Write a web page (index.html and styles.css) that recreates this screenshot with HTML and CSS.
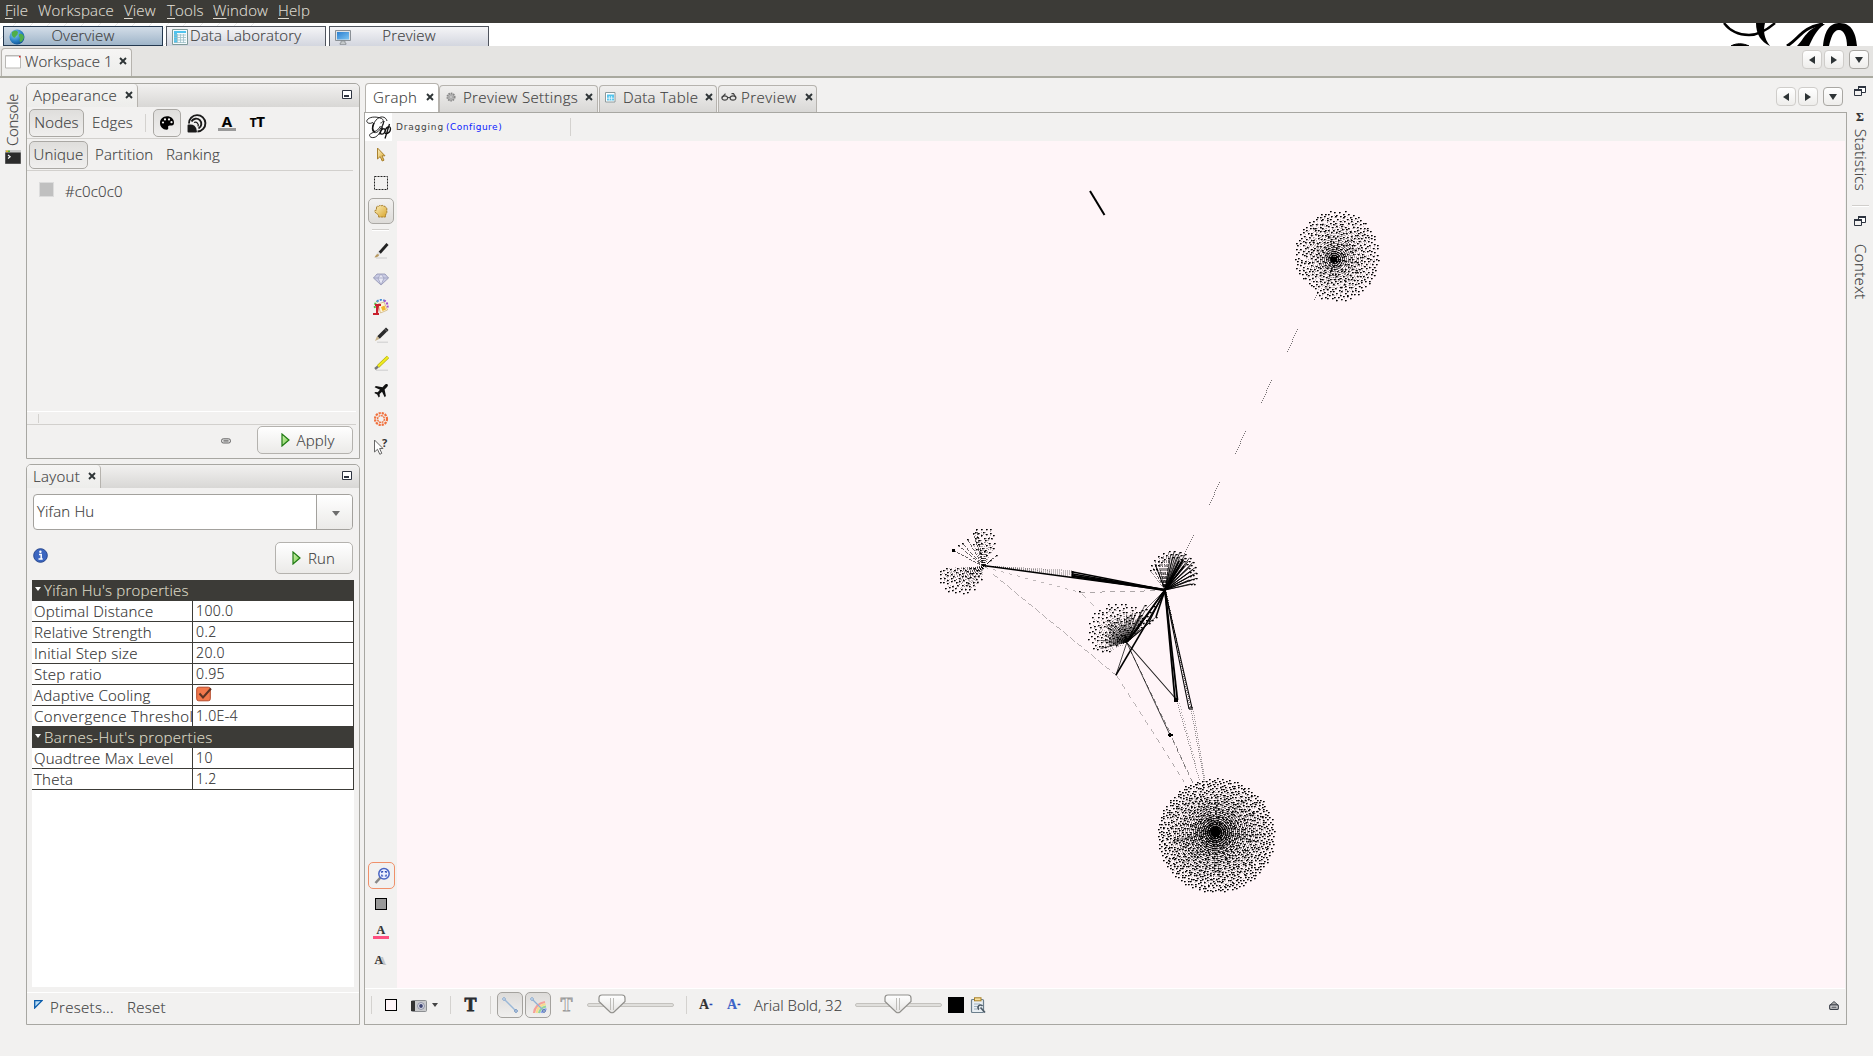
FILE: index.html
```html
<!DOCTYPE html>
<html lang="en">
<head>
<meta charset="utf-8">
<title>Gephi</title>
<link rel="stylesheet" href="styles.css">
</head>
<body>
<svg class="defs" width="0" height="0">
  <defs>
    <linearGradient id="gold" x1="0" y1="0" x2="1" y2="1"><stop offset="0" stop-color="#fbeebc"/><stop offset="1" stop-color="#d9a62e"/></linearGradient>
    <linearGradient id="knob" x1="0" y1="0" x2="0" y2="1"><stop offset="0" stop-color="#fff"/><stop offset="1" stop-color="#e4e3e1"/></linearGradient>
    <linearGradient id="green" x1="0" y1="0" x2="1" y2="1"><stop offset="0" stop-color="#d8f5b8"/><stop offset="1" stop-color="#6cc644"/></linearGradient>
    <linearGradient id="screen" x1="0" y1="0" x2="1" y2="1"><stop offset="0" stop-color="#2b7fd0"/><stop offset="1" stop-color="#7cc4f2"/></linearGradient>
    <radialGradient id="globe" cx=".35" cy=".3" r=".8"><stop offset="0" stop-color="#8fd2f5"/><stop offset=".6" stop-color="#2a7fc4"/><stop offset="1" stop-color="#0e4a86"/></radialGradient>
    <symbol id="close" viewBox="0 0 8 8"><path d="M1 1l6 6M7 1L1 7" stroke="#2e3436" stroke-width="1.9"/></symbol>
    <symbol id="min" viewBox="0 0 10 9"><path d="M.5.5h9v8h-9z" fill="#fff" stroke="#2e3440"/><path d="M2 6h5" stroke="#2e3440" stroke-width="2"/></symbol>
    <symbol id="float" viewBox="0 0 12 10"><path d="M4.5 1h7v5.500h-7z" fill="#fff" stroke="#2e3440"/><path d="M4 1h8" stroke="#2e3440" stroke-width="2"/><path d="M.5 4h7v5.500h-7z" fill="#f2f1f0" stroke="#2e3440"/><path d="M0 4h8" stroke="#2e3440" stroke-width="2"/></symbol>
    <symbol id="play" viewBox="0 0 9 14"><path d="M1 1v12l7-6z" fill="url(#green)" stroke="#1f7a12" stroke-width="1.2"/></symbol>
    <symbol id="thumb" viewBox="0 0 28 20"><path d="M4 1h20q3 0 3 3v3.500L16 18q-2 1.500-4 0L1 7.500V4q0-3 3-3z" fill="url(#knob)" stroke="#908f8b" stroke-width="1.200"/><path d="M12.500 4v12M15.500 4v12" stroke="#bdbcb8"/></symbol>
  </defs>
</svg>

<div class="menubar">
  <span class="m1"><u>F</u>ile</span><span class="m2">Workspace</span><span class="m3"><u>V</u>iew</span><span class="m4"><u>T</u>ools</span><span class="m5"><u>W</u>indow</span><span class="m6"><u>H</u>elp</span>
</div>

<div class="banner">
  <div class="persp on">
    <svg width="16" height="16" viewBox="0 0 16 16"><circle cx="8" cy="8" r="7.500" fill="url(#globe)"/><path d="M3 3q4-3 6 0 0 3-2 4-1 3-3 1-2-2-1-5zM10 5q4-1 5 3-1 5-4 5-1-2 0-4-2-2-1-4z" fill="#4fae4a"/></svg>
    <span>Overview</span>
  </div>
  <div class="persp lab">
    <svg width="16" height="16" viewBox="0 0 16 16"><path d="M.5.5h15v15H.5z" fill="#f4fafc" stroke="#7f9a98"/><path d="M2 2h12v2H2zM2 4h3v10H2z" fill="#4fc3ee"/><path d="M5.500 5v9M8.500 5v9M11.500 5v9M2 6h12M2 8.500h12M2 11h12M2 13.500h12" stroke="#9dbfc6" stroke-width=".8"/></svg>
    <span>Data Laboratory</span>
  </div>
  <div class="persp">
    <svg width="16" height="16" viewBox="0 0 16 16"><path d="M.5 1.500h15v10H.5z" fill="#dfe3e6" stroke="#8a9096"/><path d="M2 3h12v7.500H2z" fill="url(#screen)"/><path d="M6 12h4v2h1v1.500H5V14h1z" fill="#c4c8cb" stroke="#7d8388" stroke-width=".6"/></svg>
    <span>Preview</span>
  </div>
  <svg class="brand" width="151" height="23" viewBox="1722 23 151 23" fill="none" stroke="#000"><path d="M1724 23c6 8 14 12 25 12 10 0 19-6 26-12" stroke-width="2.400"/><path d="M1756 23h9c-2 8-1 15 5 23-9-4-14-12-14-23z" fill="#000" stroke="none"/><path d="M1731 46c5-3 12-3 18 0z" fill="#000" stroke-width="1"/><path d="M1787 46c13-8 15-19 36-22" stroke-width="3"/><path d="M1797 46c8-8 9-17 26-22h2c-9 6-12 14-16 22z" fill="#000" stroke="none"/><path d="M1823 46c2-18 8-23 17-23 12 0 16 11 17 23h-10c0-9-3-16-8-16-6 0-8 8-10 16z" fill="#000" stroke="none"/></svg>
</div>

<div class="worktabs">
  <div class="tab wtab"><svg width="16" height="14" viewBox="0 0 16 14"><path d="M.5.500h15v12.500H.5z" fill="#fff" stroke="#b9b8b5"/><path d="M1 1.500h13" stroke="#ddd"/><path d="M14 1h1.500v1.500H14z" fill="#e02020"/></svg><span>Workspace 1</span><svg class="x" width="8" height="8"><use href="#close"/></svg></div>
  <div class="navs"><button class="nav dim"><i class="l"></i></button><button class="nav dim"><i class="r"></i></button><button class="nav"><i class="d"></i></button></div>
</div>

<div class="work">
  <div class="gutter left">
    <span class="vert up">Console</span>
    <svg width="16" height="14" viewBox="0 0 16 14"><path d="M.5.500h15v13H.5z" fill="#2c2c2c" stroke="#555"/><path d="M0 0h16v2.500H0z" fill="#c9c9c9"/><path d="M1 .5h2v1.500H1z" fill="#e8b020"/><path d="M3 .5h2v1.500H3z" fill="#5ab030"/><path d="M3 5l2.200 1.800L3 8.500" fill="none" stroke="#fff" stroke-width="1.100"/></svg>
  </div>

  <div class="side">
    <section class="panel appearance">
      <header class="ptabs"><div class="tab ptab"><span>Appearance</span><svg class="x" width="8" height="8"><use href="#close"/></svg></div><div class="fill"><svg width="10" height="9"><use href="#min"/></svg></div></header>
      <div class="row">
        <button class="tog nodes on">Nodes</button><button class="tog edges">Edges</button><i class="vsep"></i>
        <button class="ic on"><svg width="16" height="16" viewBox="0 0 16 16"><path d="M8 1.300C3.800 1.300 1 4.300 1 8c0 3.800 3 6.700 6.500 6.700 1.400 0 2-.9 1.700-2-.4-1.400.3-2.300 1.700-2.300h1.800c1.600 0 2.300-1.100 2.300-2.700C15 3.900 12 1.300 8 1.300z" fill="#000"/><g fill="#f2f1f0"><circle cx="4" cy="7.500" r="1.100"/><circle cx="6" cy="4.400" r="1.100"/><circle cx="10" cy="4.400" r="1.100"/><circle cx="12.500" cy="7.200" r="1.100"/></g></svg></button>
        <button class="ic"><svg width="20" height="20" viewBox="0 0 20 20" fill="none" stroke="#1a1a1a" stroke-width="1.900"><path d="M2 10.500a8.200 8.200 0 1 1 8.500 8"/><path d="M4.500 8.500a5.200 5.200 0 1 1 7 7"/><path d="M7 9.500a3 3 0 0 1 4 4" stroke-width="1.300"/><path d="M1.500 18.500v-6q7-1 7.500 6z" fill="#1a1a1a" stroke-linejoin="round"/></svg></button>
        <button class="ic"><span class="glyphA">A</span></button>
        <button class="ic"><span class="glyphT"><small>T</small>T</span></button>
      </div>
      <div class="row two">
        <button class="tog unique on">Unique</button><span class="t1">Partition</span><span class="t2">Ranking</span>
      </div>
      <div class="abody"><i class="swatch"></i><span>#c0c0c0</span></div>
      <div class="strip"><i></i></div>
      <div class="afoot"><svg width="10" height="6" viewBox="0 0 10 6" fill="none" stroke="#666"><rect x=".5" y=".8" width="9" height="4.200" rx="1.800" fill="#ddd"/><path d="M2.500 2.900h5" stroke-width="1.200"/></svg><button class="btn apply"><svg width="9" height="14"><use href="#play"/></svg>Apply</button></div>
    </section>

    <section class="panel layout">
      <header class="ptabs"><div class="tab ptab ltab"><span>Layout</span><svg class="x" width="8" height="8"><use href="#close"/></svg></div><div class="fill"><svg width="10" height="9"><use href="#min"/></svg></div></header>
      <div class="combo"><span>Yifan Hu</span><b><i class="d"></i></b></div>
      <div class="runrow">
        <svg width="15" height="15" viewBox="0 0 15 15"><circle cx="7.500" cy="7.500" r="6.800" fill="#3b66c0" stroke="#27478f"/><path d="M6 6.500h2.200v4.200M5.500 11h4.200" stroke="#fff" stroke-width="1.500" fill="none"/><circle cx="7.400" cy="3.800" r="1.200" fill="#fff"/></svg>
        <button class="btn run"><svg width="9" height="14"><use href="#play"/></svg>Run</button>
      </div>
      <div class="sheet">
        <div class="group"><i></i>Yifan Hu's properties</div>
        <div class="prop"><span>Optimal Distance</span><em>100.0</em></div>
        <div class="prop"><span>Relative Strength</span><em>0.2</em></div>
        <div class="prop"><span>Initial Step size</span><em>20.0</em></div>
        <div class="prop"><span>Step ratio</span><em>0.95</em></div>
        <div class="prop"><span>Adaptive Cooling</span><em><svg width="16" height="16" viewBox="0 0 16 16"><rect x=".7" y="1.200" width="13.600" height="13.600" rx="2" fill="#f2784b" stroke="#b5492a"/><path d="M3.500 7.500l3.500 4L15 2.500" fill="none" stroke="#5c3324" stroke-width="2"/></svg></em></div>
        <div class="prop"><span class="wide">Convergence Threshold</span><em>1.0E-4</em></div>
        <div class="group second"><i></i>Barnes-Hut's properties</div>
        <div class="prop"><span>Quadtree Max Level</span><em>10</em></div>
        <div class="prop"><span>Theta</span><em>1.2</em></div>
      </div>
      <div class="presets"><svg width="9" height="9" viewBox="0 0 9 9"><path d="M.7.700h7.300L.7 8z" fill="#b9dcf5" stroke="#0b5cab" stroke-width="1.300"/></svg><span class="pr">Presets...</span><span>Reset</span></div>
    </section>
  </div>

  <main class="editor">
    <div class="etabs">
      <div class="tab etab cur"><span>Graph</span><svg class="x" width="8" height="8"><use href="#close"/></svg></div>
      <div class="tab etab ps"><svg width="10" height="10" viewBox="0 0 11 11"><circle cx="5.500" cy="5.500" r="4" fill="#b5b5b5" stroke="#888" stroke-width="2" stroke-dasharray="1.600 1"/><circle cx="5.500" cy="5.500" r="1.300" fill="#eee" stroke="#888" stroke-width=".6"/></svg><span>Preview Settings</span><svg class="x" width="8" height="8"><use href="#close"/></svg></div>
      <div class="tab etab dt"><svg width="11" height="11" viewBox="0 0 11 11"><path d="M.5.500h9.500v9.500H.5z" fill="#fff" stroke="#8c9a9c"/><path d="M2 2.500h7v6H2z" fill="#55c4ec"/><path d="M4.300 4v4.500M6.600 4v4.500M2 6.200h7" stroke="#fff" stroke-width=".7"/></svg><span>Data Table</span><svg class="x" width="8" height="8"><use href="#close"/></svg></div>
      <div class="tab etab pv"><svg width="16" height="8" viewBox="0 0 16 8" fill="none" stroke="#444" stroke-width="1.200"><ellipse cx="3.800" cy="5" rx="2.900" ry="2.200"/><ellipse cx="12" cy="5" rx="2.900" ry="2.200"/><path d="M6.700 4.500h2.500M1 4.500L4.500.7M14.900 4.500L12.500.7h-2"/></svg><span>Preview</span><svg class="x" width="8" height="8"><use href="#close"/></svg></div>
      <div class="navs"><button class="nav dim"><i class="l"></i></button><button class="nav dim"><i class="r"></i></button><button class="nav"><i class="d"></i></button></div>
    </div>
    <div class="ebody">
      <div class="status">
        <svg width="27" height="28" viewBox="0 0 27 28" fill="none" stroke="#111"><path d="M0 0h27v28H0z" fill="#fff" stroke="none"/><path d="M8 9.500C3 12 0 8.500 3 6s9-2.500 13.500-.5c3 1.500 1.500 4-1 4.500M22 8C20 1 10 3 7.500 14.500c-.8 5.500 3.500 7 7 2.500 2-3 4-6 4.500-9-2 8-5 15.500-10 16.500-4 .8-6-2.500-3-4 4-2 8-3.500 9.500-7.500" stroke-width=".9"/><path d="M9 10c-2 4-2 8 1 9" stroke-width="1.600"/><path d="M14.500 21.500l3-7M16.500 17c3-3 4.500 0 3 2.500s-4.500 2-4-.5zM20 19.500c0-5 5-8 5.500-4 .3 4-5.500 7-5.500 4zM24.500 11l-4.500 14.500" stroke-width="1.300"/></svg>
        <span class="drag">Dragging</span><a class="conf">(Configure)</a><i class="vsep"></i>
      </div>
      <div class="tools">
        <div class="t"><svg width="16" height="16" viewBox="0 0 16 16"><path d="M4.500 1v11l2.700-2.500 2 4.500 1.800-.8-2-4.400H12z" fill="url(#gold)" stroke="#a9812e"/></svg></div>
        <div class="t"><svg width="16" height="16" viewBox="0 0 16 16"><path d="M1.500 1.500h13v13h-13z" fill="none" stroke="#222" stroke-dasharray="2 1"/></svg></div>
        <div class="t on"><svg width="16" height="16" viewBox="0 0 16 16"><path d="M3.500 5q0-2.500 2.200-1.600.8-1.600 2.400-.6 1.500-1 2.500.4 1.600-.4 1.900 1 1.300.3 1.300 1.800V9.500L12.500 12v2H5.500v-2L2 9.200Q1 7 3.300 7.200z" fill="url(#gold)" stroke="#a9812e" stroke-dasharray="2.500 .5"/></svg></div>
        <i class="hsep"></i>
        <div class="t"><svg width="16" height="16" viewBox="0 0 16 16"><path d="M3 15h11" stroke="#ccc"/><path d="M14.500 1l-8 9" stroke="#222" stroke-width="2.800"/><path d="M6.500 9.500L4.500 12" stroke="#ddd" stroke-width="3"/><path d="M5 11q-2 0-3.500 3.500 4-.2 4.500-2.500z" fill="#b99a62"/></svg></div>
        <div class="t"><svg width="16" height="16" viewBox="0 0 16 16"><path d="M4 3h8l3.500 4L8 14 .5 7z" fill="#c9cbe4" stroke="#8d8fae" stroke-width=".8"/><path d="M.5 7h15M5 7l3 7 3-7-3-4z" fill="#e6e7f4" stroke="#9a9cba" stroke-width=".7"/></svg></div>
        <div class="t"><svg width="16" height="16" viewBox="0 0 16 16"><g fill="none" stroke-width="2" stroke-dasharray="2 1.200"><path d="M2 9a6.200 6.200 0 0 1 2-6.500" stroke="#58c04a"/><path d="M4 2.500A6.200 6.200 0 0 1 11 1.500" stroke="#4a90d8"/><path d="M11 1.500a6.200 6.200 0 0 1 3.500 7" stroke="#a44fc8"/></g><path d="M5 5l6-2 3.500 8-7 3z" fill="#fff4d8" stroke="#c9aa70" stroke-width=".7"/><path d="M8 8l3.500-1.500 1.500 4-3.500 1.500z" fill="#efb72e"/><path d="M2 5h6v2H6L5 14H3V7H2zM0 14h6v2H0z" fill="#c8202c"/></svg></div>
        <div class="t"><svg width="16" height="16" viewBox="0 0 16 16"><path d="M4 15.200h11" stroke="#ccc"/><path d="M14.300 1.700L5.500 10.500" stroke="#2b2b2b" stroke-width="3.600"/><path d="M4 9.200l2.600 2.600L2 14z" fill="#c8b48c"/><path d="M11.800 2.200l2.500 2.500" stroke="#888" stroke-width=".8"/></svg></div>
        <div class="t"><svg width="16" height="16" viewBox="0 0 16 16"><path d="M3 15.200h12" stroke="#ccc"/><path d="M15 2L5 11.500" stroke="#b5ad10" stroke-width="3.200"/><path d="M15 2L5 11.500" stroke="#f0ec20" stroke-width="2"/><path d="M5 11.500l-3 2.500" stroke="#777" stroke-width="2.400"/></svg></div>
        <div class="t"><svg width="16" height="16" viewBox="0 0 16 16"><path d="M14.600 1.400c-.9-.8-2.300 0-3.200.9L9.500 4.300 2.800 3 1.600 4.200 7 6.800 4.700 9.200 2.300 9l-1 1 2.900 1.500L5.700 14.500l1.100-1-.2-2.500L9 8.800l2.700 5.500 1.200-1.200-1.300-6.700 2-1.900c1-.9 1.800-2.300 1-3.100z" fill="#111"/></svg></div>
        <div class="t"><svg width="16" height="16" viewBox="0 0 16 16" fill="none" stroke="#f0703c"><circle cx="8" cy="8" r="6" stroke-width="2.200" stroke-dasharray="2.200 .94"/><circle cx="8" cy="8" r="3.400" stroke-width="1.400" stroke-dasharray="2 .6"/></svg></div>
        <div class="t"><svg width="18" height="18" viewBox="0 0 18 18"><path d="M2.500 2v12l3-2.700 2.300 5 2-1-2.200-4.800H11z" fill="#fff" stroke="#666"/><text x="10" y="9" class="q">?</text></svg></div>
        <i class="grow"></i>
        <div class="t focus"><svg width="18" height="18" viewBox="0 0 18 18"><path d="M7.500 10.500L2.500 16" stroke="#888" stroke-width="2.600"/><circle cx="11" cy="6.800" r="5.200" fill="#eef2ff" stroke="#4a66c4" stroke-width="1.500"/><path d="M8.800 6V4.600h1.400M11.800 4.600h1.400V6M13.200 7.600V9h-1.400M10.200 9H8.800V7.600" fill="none" stroke="#2b49b4" stroke-width="1.100"/></svg></div>
        <div class="t"><i class="sq gray"></i></div>
        <div class="t"><span class="pinkA">A</span></div>
        <div class="t"><span class="shadeA">A</span></div>
      </div>
      <canvas id="graph" width="1448" height="847"></canvas>
      <div class="bottom">
        <i class="vsep s1"></i><i class="sq pink"></i>
        <svg class="cam" width="16" height="13" viewBox="0 0 16 13"><rect x=".5" y="1.500" width="15" height="11" rx="1" fill="#c9cacc" stroke="#8d8f92"/><path d="M0 2h4v10H0z" fill="#333"/><circle cx="10" cy="7" r="3.400" fill="#e8e8ee" stroke="#8a8ea4"/><circle cx="10" cy="7" r="1.900" fill="#3e4574"/></svg>
        <i class="d small"></i><i class="vsep s2"></i>
        <span class="bigT">T</span><i class="vsep s3"></i>
        <button class="bt"><svg width="18" height="18" viewBox="0 0 18 18"><path d="M3 3l12 12" stroke="#9ab8d8" stroke-width="1.300"/><circle cx="3" cy="3" r="1.300" fill="#fff" stroke="#7ea2cc"/><circle cx="15" cy="15" r="1.300" fill="#fff" stroke="#5c84b8"/></svg></button>
        <button class="bt"><svg width="18" height="18" viewBox="0 0 18 18" fill="none"><path d="M5 17q1-9 11-11" stroke="#f5a09a" stroke-width="2.200"/><path d="M7.500 17q1-7 9-9" stroke="#f6dc8c" stroke-width="2.200"/><path d="M10 17q1-5 7-6.500" stroke="#94d69a" stroke-width="2.200"/><path d="M12.500 17q1-3 5-4" stroke="#94a8ec" stroke-width="2.200"/><path d="M3 3l12 12" stroke="#8fb0d4" stroke-width="1.300"/><circle cx="3" cy="3" r="1.300" fill="#fff" stroke="#7ea2cc"/><circle cx="15" cy="15" r="1.300" fill="#fff" stroke="#3c60a8"/></svg></button>
        <span class="bigT ghost">T</span>
        <div class="slider"><svg class="thumb a" width="28" height="20"><use href="#thumb"/></svg></div>
        <i class="vsep s4"></i>
        <span class="fa">A<i>-</i></span><span class="fa blue">A<i>-</i></span>
        <span class="font">Arial Bold, 32</span>
        <div class="slider two"><svg class="thumb b" width="28" height="20"><use href="#thumb"/></svg></div>
        <i class="black"></i>
        <svg class="clip" width="17" height="17" viewBox="0 0 17 17"><rect x="1.500" y="2.500" width="12" height="13" rx="1" fill="#e8eef2" stroke="#6c7f8c" stroke-width="1.200"/><rect x="4.500" y=".8" width="6.500" height="3" fill="#f5dfa0" stroke="#a87f22"/><path d="M4 7h6M4 9.500h4M4 12h3" stroke="#9fb2c0"/><path d="M15 15.500L10.500 10.500M9 12.500a2.500 2.500 0 1 1 3.500-3.500" stroke="#4c5a66" stroke-width="1.700" fill="none"/></svg>
        <svg class="eject" width="10" height="9" viewBox="0 0 10 9"><path d="M5 .5L9 4H1z" fill="#aaa" stroke="#3a3f48" stroke-width=".9"/><rect x=".7" y="4" width="8.600" height="4.300" rx=".8" fill="#ddd" stroke="#3a3f48" stroke-width="1.200"/><path d="M2.500 6.200h5" stroke="#3a3f48"/></svg>
      </div>
    </div>
  </main>

  <div class="gutter right">
    <svg width="12" height="10"><use href="#float"/></svg>
    <span class="sigma">Σ</span>
    <span class="vert stat">Statistics</span>
    <i class="hsep"></i>
    <svg width="12" height="10"><use href="#float"/></svg>
    <span class="vert ctx">Context</span>
  </div>
</div>
<script src="graph.js"></script>
</body>
</html>
```
FILE: styles.css
```css
* { box-sizing: border-box; }
body { margin: 0; width: 1873px; height: 1056px; overflow: hidden; background: #f2f1f0; color: #404040; font: 300 15px/20px "Open Sans", "Noto Sans", sans-serif; letter-spacing: .15px; -webkit-text-stroke: .15px; display: flex; flex-direction: column; }
svg, canvas { display: block; flex: none; }
i, em { font-style: normal; }
span, a, button { white-space: nowrap; }
button { font: inherit; letter-spacing: inherit; color: inherit; margin: 0; padding: 0; border: 0; background: none; display: flex; align-items: center; justify-content: center; }
.defs { position: absolute; }

.menubar { height: 23px; flex: none; background: #3c3b37; color: #dfdbd2; display: flex; padding-left: 5px; line-height: 21px; }
.menubar u { text-underline-offset: 2px; text-decoration-thickness: 1px; }
.m1 { width: 33px; } .m2 { width: 86px; } .m3 { width: 43px; } .m4 { width: 46px; } .m5 { width: 65px; }

.banner { height: 23px; flex: none; background: repeating-linear-gradient(135deg, #fff 0 11px, #ececec 11px 12px) 0 0 / 260px 23px no-repeat, #fff; display: flex; padding: 3px 0 0 3px; gap: 3px; }
.persp { width: 160px; height: 20px; border: 1px solid #50555e; border-bottom: 0; background: linear-gradient(#f5f5f7, #d3d6df); display: flex; padding: 2px 0 0 5px; line-height: 16px; }
.persp span { flex: 1; text-align: center; padding-right: 21px; margin-top: -2px; }
.persp.lab span { padding: 0 0 0 2px; text-align: left; }
.persp.on { border-color: #24384f; background: linear-gradient(#d3dde8, #9fb5c9); border-radius: 0; }
.brand { margin: -3px 0 0 auto; }

.worktabs { height: 32px; flex: none; background: #e5e4e2; border-bottom: 2px solid #a9a99f; display: flex; padding: 2px 4px 0 1px; }
.tab { display: flex; align-items: center; border: 1px solid #b6b3ae; border-bottom: 0; border-radius: 4px 4px 0 0; background: linear-gradient(#f6f5f4, #ededeb); }
.tab .x { margin-left: auto; }
.wtab { width: 131px; height: 28px; padding: 0 4px 3px 3px; gap: 4px; letter-spacing: .05px; }
.wtab > svg:first-child { margin-top: 2px; }
.navs { margin-left: auto; display: flex; gap: 2px; }
.worktabs .navs { padding-top: 2px; }
.nav { width: 20px; height: 19px; border: 1px solid #a9a7a3; border-radius: 4px; background: linear-gradient(#fff, #eeedeb); }
.nav:last-child { margin-left: 3px; }
.nav.dim { border-color: #cfcdca; }
.l, .r, .d { width: 0; height: 0; border: 4px solid transparent; }
.l { border-width: 4px 6px 4px 0; border-right-color: #2e3436; }
.r { border-width: 4px 0 4px 6px; border-left-color: #2e3436; }
.d { border-width: 6px 4px 0; border-top-color: #2e3436; }

.work { flex: 1; display: flex; }
.gutter { display: flex; flex-direction: column; align-items: center; }
.left { width: 26px; padding-top: 15px; }
.vert { writing-mode: vertical-rl; line-height: 20px; }
.vert.up { transform: rotate(180deg); height: 52px; margin: 1px 2px 4px 0; letter-spacing: -.3px; }
.right { width: 26px; padding: 8px 0 0 0; }
.sigma { font: bold 12px/12px "Liberation Serif", serif; color: #333; margin: 15px 0 6px; }
.stat { height: 64px; letter-spacing: .3px; margin-left: 2px; } .ctx { margin: 18px 0 0 2px; letter-spacing: .4px; }
.right .hsep { margin: 12px 0 9px; }
.hsep { width: 17px; height: 2px; border-top: 1px solid #d0cecb; background: #fff; flex: none; }
.vsep { width: 1px; background: #d4d2cf; flex: none; }

.side { width: 334px; padding-top: 5px; display: flex; flex-direction: column; gap: 5px; }
.panel { border: 1px solid #a8a7a2; border-radius: 5px 5px 0 0; display: flex; flex-direction: column; }
.appearance { height: 376px; } .layout { height: 561px; }
.ptabs { height: 23px; display: flex; flex: none; }
.ptab { width: 111px; border-width: 0 1px 0 0; padding: 0 4px 1px 6px; letter-spacing: .3px; }
.ltab { width: 74px; }
.fill { flex: 1; border-radius: 0 5px 0 0; background: linear-gradient(#f2f1f0, #d8d7d5); display: flex; justify-content: flex-end; padding: 6px 7px 0 0; }
.row { height: 32px; flex: none; border-bottom: 1px solid #d2d0cd; display: flex; align-items: center; padding-left: 2px; }
.two > span { margin-top: -2px; }
.on { border: 1px solid #aaa8a4; border-radius: 5px; background: linear-gradient(#dfdedc, #f0efee); }
.tog { height: 28px; padding-bottom: 1px; } .nodes { width: 55px; } .edges { width: 57px; }
.row .vsep { height: 18px; margin: 0 7px 0 4px; }
.ic { width: 28px; height: 28px; margin-right: 2px; }
.glyphA { width: 18px; border-bottom: 3px solid #999; color: #000; font: bold 15px/14px "Open Sans", sans-serif; text-align: center; }
.glyphT { color: #000; font: bold 15px/20px "Open Sans", sans-serif; letter-spacing: -.5px; margin-top: -1px; }
.glyphT small { font-size: 12px; }
.unique { width: 59px; } .t1 { margin-left: 7px; width: 71px; }
.abody { height: 240px; display: flex; padding: 10px 0 0 12px; gap: 11px; }
.swatch { width: 15px; height: 15px; margin-top: 1px; background: #c0c0c0; border: 1px solid #dcdcdc; }
.strip { height: 14px; border-top: 1px solid #fff; border-bottom: 1px solid #d2d0cd; margin-right: 3px; padding: 2px 0 0 11px; }
.strip i { display: block; width: 1px; height: 9px; background: #d4d2cf; }
.afoot { display: flex; padding: 1px 6px 0 194px; justify-content: space-between; }
.afoot > svg { margin-top: 12px; }
.btn { border: 1px solid #b4b2ae; border-radius: 5px; background: linear-gradient(#fff, #ebeae8); gap: 7px; }
.apply { width: 96px; height: 28px; padding: 0 0 1px 5px; } .run { width: 78px; height: 32px; padding: 0 1px 1px 0; }
.combo { margin: 6px 6px 0; height: 36px; border: 1px solid #a3a19d; border-radius: 4px; background: #fff; display: flex; flex: none; line-height: 33px; padding-left: 3px; color: #3a3a3a; }
.combo span { flex: 1; }
.combo b { width: 36px; border-left: 1px solid #a3a19d; background: linear-gradient(#fff, #ebeae8); display: flex; align-items: center; justify-content: center; border-radius: 0 4px 4px 0; padding: 2px 0 0 2px; }
.combo .d { border-width: 5px 4px 0; border-top-color: #6d6d6d; }
.runrow { height: 50px; flex: none; display: flex; justify-content: space-between; padding: 12px 6px 0 6px; }
.runrow > svg { margin-top: 6px; }
.sheet { margin: 0 5px; height: 407px; flex: none; background: #fff; color: #303030; line-height: 20px; }
.group { height: 21px; background: #3c3b37; color: #dfdbc8; padding-left: 3px; display: flex; gap: 3px; line-height: 20px; letter-spacing: .22px; }
.group.second { letter-spacing: .34px; }
.group i { margin-top: 7px; height: 0; border: 4px solid transparent; border-width: 4px 3.500px 0; border-top-color: #fff; }
.prop { height: 21px; border-bottom: 1px solid #3c3b37; border-right: 1px solid #3c3b37; display: flex; line-height: 21px; letter-spacing: .25px; }
.prop span { width: 161px; border-right: 1px solid #3c3b37; overflow: hidden; padding-left: 2px; flex: none; }
.prop .wide { letter-spacing: .42px; }
.prop em { padding-left: 3px; font-size: 14px; line-height: 19px; letter-spacing: .4px; }
.prop em svg { margin: 1px 0 0; }
.presets { margin-top: 5px; border-top: 1px solid #fff; height: 32px; display: flex; padding: 4px 0 0 7px; letter-spacing: .3px; }
.presets svg { margin-top: 3px; } .pr { margin-left: 7px; width: 77px; }

.editor { margin-left: 4px; width: 1483px; padding-top: 5px; }
.etabs { height: 29px; display: flex; align-items: flex-end; padding: 0 4px 0 1px; letter-spacing: .35px; }
.etab { height: 27px; padding: 0 4px 4px 6px; gap: 7px; margin-right: 1px; background: linear-gradient(#f0efee, #d9d8d6); }
.cur { width: 74px; height: 29px; background: #fff; padding: 0 4px 2px 7px; margin-right: 0; }
.ps { width: 159px; } .dt { width: 118px; padding-left: 5px; } .pv { width: 99px; padding: 0 3px 4px 2px; gap: 4px; letter-spacing: .5px; }
.etabs .navs { align-self: flex-start; padding-top: 4px; }
.ebody { height: 913px; border: 1px solid #a8a7a2; display: grid; grid-template: 28px 847px 36px / 32px 1448px; background: #f2f1f0; }
.status { grid-column: 1 / 3; display: flex; align-items: center; font: 9px/12px "DejaVu Sans", sans-serif; letter-spacing: .8px; color: #444; -webkit-text-stroke: 0; }
.drag { margin-left: 4px; width: 50px; } .conf { color: #0a20ff; letter-spacing: .5px; width: 124px; }
.status .vsep { height: 18px; }
.tools { display: flex; flex-direction: column; padding: 0 0 14px 3px; }
.t { width: 26px; height: 28px; display: flex; align-items: center; justify-content: center; flex: none; }
.t.on { height: 26px; margin: 1px 0 5px; background: linear-gradient(#f2f1f0, #dddbd8); }
.tools .hsep { margin: 0 4px 6px; }
.grow { flex: 1; }
.t.focus { border: 1.500px solid #f0906a; border-radius: 5px; height: 27px; width: 27px; margin-bottom: 1px; }
.q { font: bold 11px "Open Sans", sans-serif; fill: #333; }
.sq { width: 12px; height: 12px; border: 1px solid #000; display: block; flex: none; } .gray { background: #999; } .pink { background: #fff5f8; }
.pinkA { width: 16px; border-bottom: 3px solid #ff4f80; font: bold 12px/11px "Liberation Serif", serif; text-align: center; color: #333; }
.shadeA { font: bold 12px/12px "Liberation Serif", serif; color: #333; text-shadow: 3px 1px 0 #c4c4c4; margin-right: 4px; }
#graph { background: #fff5f8; }
.bottom { grid-column: 1 / 3; border-top: 1px solid #fff; display: flex; align-items: center; padding: 0 6px 3px 6px; }
.bottom .vsep { height: 18px; }
.pink { margin: 0 14px 0 13px; }
.small { margin: 0 12px 0 5px; border-width: 4px 3px 0; border-top-color: #444; flex: none; }
.bigT { width: 15px; margin: 0 12px; font: bold 18px/20px "Liberation Serif", serif; color: #2a2c30; text-align: center; -webkit-text-stroke: .8px #2a2c30; }
.bt { width: 26px; height: 26px; border: 1px solid #a4a29e; border-radius: 5px; background: linear-gradient(#dddbd9, #f0efee); margin-right: 2px; }
.s3 { margin-right: 6px; }
.ghost { color: #f4f4f4; -webkit-text-stroke: .8px #999; margin: 0 13px 0 6px; }
.slider { width: 87px; height: 4px; border: 1px solid #c4c2be; border-radius: 2px; background: #e0dfdc; position: relative; flex: none; margin-right: 12px; }
.thumb { position: absolute; left: 10px; top: -10px; } .thumb.b { left: 28px; }
.fa { margin-left: 12px; width: 17px; font: bold 14px/16px "Liberation Serif", serif; color: #333; display: flex; }
.blue { margin-left: 11px; color: #3c63c8; } .fa i { font: bold 10px/12px "Open Sans", sans-serif; color: #2b49b4; }
.font { margin: -1px 0 0 10px; width: 101px; letter-spacing: 0; }
.two { margin-right: 6px; }
.black { width: 16px; height: 16px; background: #000; margin-right: 6px; }
.eject { margin-left: auto; }
```
FILE: graph.js
```js
const ctx = document.getElementById('graph').getContext('2d');
ctx.translate(-397, -141);

let seed = 7;
const rnd = () => (seed = (seed * 16807) % 2147483647) / 2147483647;

function px(x, y, a) {
  ctx.fillStyle = `rgba(0,0,0,${a})`;
  ctx.fillRect(Math.round(x), Math.round(y), 1, 1);
}
function dot(x, y) {
  px(x, y, 1); px(x + 1, y, .7); px(x, y + 1, .35); px(x + 1, y + 1, .15);
}
function line(x1, y1, x2, y2, w, a = 1) {
  ctx.strokeStyle = `rgba(0,0,0,${a})`;
  ctx.lineWidth = w;
  ctx.beginPath(); ctx.moveTo(x1, y1); ctx.lineTo(x2, y2); ctx.stroke();
}
// One-pixel edge, plotted every `step` pixels; on/off groups give a dash
function dots(x1, y1, x2, y2, a, step = 2, on = 0, off = 0) {
  const n = Math.max(Math.abs(x2 - x1), Math.abs(y2 - y1));
  for (let i = 0; i < n; i += step) {
    if (on && i % (on + off) >= on) continue;
    px(x1 + (x2 - x1) * i / n, y1 + (y2 - y1) * i / n, a);
  }
}
// Leaves packed in an ellipse, joined to their hub
function cluster(cx, cy, rx, ry, hx, hy, n, spoke, keep = () => true) {
  for (let i = 0; i < n; i++) {
    const r = Math.sqrt((i + .5) / n), t = i * 2.39996;
    const j = r > .95 ? .4 : 2;
    const x = cx + rx * r * Math.cos(t) + (rnd() - .5) * j;
    const y = cy + ry * r * Math.sin(t) + (rnd() - .5) * j;
    if (!keep(x, y)) continue;
    const d = Math.hypot(x - hx, y - hy);
    for (let k = 2; k < d; k += 2)
      if (rnd() < .55) px(hx + (x - hx) * k / d, hy + (y - hy) * k / d, spoke);
    dot(x, y);
  }
}
function rays(hx, hy, r, n, w, a) {
  for (let i = 0; i < n; i++) {
    const t = i * 6.283 / n + rnd() * .25, q = r * (.4 + rnd() * .6);
    line(hx, hy, hx + q * Math.cos(t), hy + q * Math.sin(t), w, a);
  }
}

line(1090, 191, 1104.500, 215, 2);

cluster(1336.500, 255.500, 42, 45.500, 1334, 259, 500, .2, (x, y) => !(x < 1318 && y > 272 + (x - 1296)));
rays(1334, 259, 34, 14, .8, .45);
rays(1334, 259, 14, 22, .7, .5);
ctx.fillStyle = '#000'; ctx.fillRect(1331, 257, 6, 5);

[[1317, 293, 1313, 300], [1297, 329, 1286, 353], [1271, 380, 1260, 404], [1245, 431, 1234, 455], [1219, 482, 1208, 506], [1193, 535, 1183, 556]]
  .forEach(s => dots(...s, .55, 2));

cluster(1215.500, 835, 58.500, 57, 1215, 832, 1180, .17);
rays(1215, 832, 46, 30, .9, .5);
rays(1215, 832, 24, 44, .8, .5);
ctx.fillStyle = '#000'; ctx.beginPath(); ctx.arc(1215.500, 832, 5, 0, 7); ctx.fill();

// Upper left community
cluster(960, 573, 22.500, 21, 983, 566, 105, .25, (x, y) => y > 567);
cluster(984, 541, 12, 15, 983, 566, 34, .3);
[[953, 550], [958, 545], [962, 543], [967, 539], [973, 533], [976, 529], [996, 555], [990, 560]].forEach(([x, y]) => { dots(983, 566, x, y, .6, 1, 3, 1); dot(x, y); });
ctx.fillStyle = '#000'; ctx.fillRect(952, 549, 3, 3);
for (let i = 0; i < 6; i++) dots(985, 565.500, 1072, 570 + i * 1.200, .25, 2);
line(983, 565.500, 1165, 590, 1.700);
line(1073, 572, 1165, 590, 1.600); line(1073, 576, 1165, 590, 2.500); line(1073, 574, 1165, 590, 1.600); line(1072.500, 571, 1072.500, 577, 2);
dots(985, 567, 1080, 592, .25, 1, 3, 5);
dots(1080, 592, 1164, 590, .32, 1, 5, 5); dot(1079, 591);
dots(1082, 594, 1098, 610, .25, 1, 4, 4);
dots(993, 574, 1116, 675, .28, 1, 5, 2);
dots(1116, 675, 1157, 739, .26, 1, 5, 4);
dots(1157, 739, 1184, 782, .3, 1, 4, 4);

// Right hub
for (let i = 0; i < 44; i++) {
  const t = 3.300 + (i / 43) * 3.500, k = 1 - (i % 3) * .13;
  const x = 1173 + 23.500 * k * Math.cos(t), y = 574 + 23 * k * Math.sin(t);
  if (i > 15) line(1165, 590, x, y, .9, .9); else dots(1165, 590, x, y, .4, 1, 3, 1);
  dot(x, y);
}
[[1183, 560], [1181, 563], [1184, 566], [1179, 561]].forEach(([x, y]) => line(1165, 590, x, y, 1.600));
line(1165, 590, 1155, 564, 1); line(1165, 590, 1160, 570, .8, .6);

// Centre community
cluster(1118, 632, 31, 30, 1127, 642, 180, .25, (x, y) => y < 653 - Math.max(0, x - 1106) * .7);
for (let i = 0; i < 28; i++) {
  const t = 2.900 + i * .1, q = 17 + rnd() * 14;
  line(1127, 642, 1127 + q * Math.cos(t), 642 + q * Math.sin(t), .8, .8);
}
[[1145, 605], [1142, 610], [1150, 612], [1147, 616], [1154, 606], [1156, 617], [1141, 615], [1152, 620], [1146, 609], [1149, 623]].forEach(([x, y]) => { line(1127, 642, x, y, .8, .8); dot(x, y); });
line(1165, 590, 1127, 642, 1.800); line(1163, 592, 1134, 634, 1.200); line(1165, 590, 1156, 617, 1.600);
line(1165, 590, 1145, 610, .9, .6); line(1165, 590, 1149, 622, 1.200);
line(1165, 592, 1116, 675, 1.500); line(1127, 642, 1116, 675, .9, .8);
ctx.fillRect(1115, 674, 2, 2);
line(1127, 643, 1176, 699, 1.100, .9);
line(1127, 643, 1170, 735, 1, .75); dots(1130, 650, 1170, 733, .4, 1, 4, 3);
ctx.fillStyle = '#000'; ctx.fillRect(1168, 734, 5, 2); ctx.fillRect(1169, 733, 2, 4);
line(1165, 590, 1175, 700, 1.800); line(1165, 590, 1177.500, 700, 1.800); ctx.fillRect(1174, 698, 4, 4);
line(1165, 590, 1189, 709, 1.100); line(1165, 590, 1192, 708, 1.100); dots(1166, 592, 1190, 708, .6, 2); ctx.fillRect(1189, 707, 4, 3);

// Faint edges to the lower hub
dots(1172, 738, 1193, 784, .4, 1, 5, 3); dots(1173, 741, 1186, 770, .35, 1, 4, 4);
dots(1177, 703, 1199, 780, .4, 2); dots(1179, 703, 1196, 766, .3, 3);
dots(1191, 711, 1204, 782, .4, 2); dots(1193, 711, 1205, 782, .35, 2);
```
